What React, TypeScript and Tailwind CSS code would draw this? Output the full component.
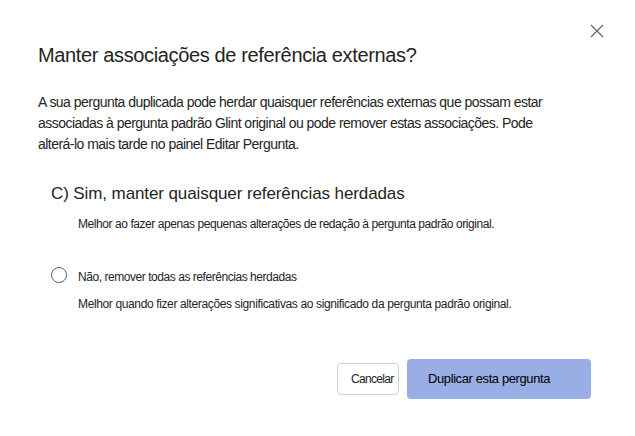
import React from "react";

export default function App() {
  return (
    <div className="relative w-[635px] h-[436px] bg-white text-[#242424] font-['Liberation_Sans',Arial,sans-serif] overflow-hidden">
      <button className="absolute left-[590px] top-[24px] w-[14px] h-[14px] flex items-center justify-center">
        <svg width="14" height="14" viewBox="0 0 14 14" fill="none">
          <path d="M1 1L13 13M13 1L1 13" stroke="#616161" strokeWidth="1.1" />
        </svg>
      </button>
      <div className="pt-[41px] pl-[38px] pr-[64px]">
        <h1 className="text-[20px] leading-[28px] font-normal tracking-[-0.36px]">Manter associações de referência externas?</h1>
        <p className="mt-[23px] text-[14px] leading-[21px] tracking-[-0.53px]">
          A sua pergunta duplicada pode herdar quaisquer referências externas que possam estar associadas à pergunta padrão Glint original ou pode remover estas associações. Pode alterá-lo mais tarde no painel Editar Pergunta.
        </p>
        <div className="mt-[28px] pl-[13px] text-[17px] leading-[22px] tracking-[-0.1px]">C) Sim, manter quaisquer referências herdadas</div>
        <div className="mt-[11px] pl-[40px] text-[12px] leading-[16px] tracking-[-0.43px]">Melhor ao fazer apenas pequenas alterações de redação à pergunta padrão original.</div>
        <div className="mt-[36px] flex items-center h-[18px]">
          <span className="ml-[13px] mb-[5px] w-[16px] h-[16px] rounded-full border border-[#616161] shrink-0" />
          <span className="ml-[11px] text-[12px] leading-[18px] tracking-[-0.45px]">Não, remover todas as referências herdadas</span>
        </div>
        <div className="mt-[10px] pl-[40px] text-[12px] leading-[16px] tracking-[-0.37px]">Melhor quando fizer alterações significativas ao significado da pergunta padrão original.</div>
      </div>
      <div className="absolute right-[44px] bottom-[37px] flex items-center gap-[8px]">
        <button className="h-[32px] w-[62px] rounded-[4px] border border-[#d1d1d1] bg-white pl-[13px] text-left text-[12px] tracking-[-0.7px] text-[#242424]">Cancelar</button>
        <button className="h-[40px] w-[184px] rounded-[4px] bg-[#98aee4] pl-[21px] text-left text-[13px] tracking-[-0.4px] text-black">Duplicar esta pergunta</button>
      </div>
    </div>
  );
}
